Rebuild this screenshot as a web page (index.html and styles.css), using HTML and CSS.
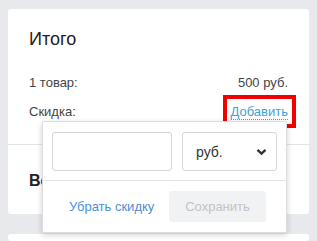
FILE: index.html
```html
<!DOCTYPE html>
<html lang="ru">
<head>
    <meta charset="UTF-8">
    <meta name="viewport" content="width=device-width, initial-scale=1.0">
    <title>Итого</title>
    <link rel="stylesheet" href="styles.css">
</head>
<body>

    <!-- Summary card -->
    <div class="card summary">
        <div class="summary-head">
            <h2 class="summary-title">Итого</h2>
            <div class="row">
                <span>1 товар:</span>
                <span>500 руб.</span>
            </div>
            <div class="row">
                <span>Скидка:</span>
                <span class="highlight"><a class="dotted-link" href="#">Добавить</a></span>
            </div>
        </div>
        <div class="summary-total">Всего</div>

        <!-- Discount popover -->
        <div class="popover">
            <div class="popover-body">
                <input class="field" type="text">
                <div class="select">
                    <span>руб.</span>
                    <svg width="11" height="8" viewBox="0 0 11 8"><path d="M1.5 1.8 L5.5 5.6 L9.5 1.8" fill="none" stroke="#333" stroke-width="2.4"/></svg>
                </div>
            </div>
            <div class="popover-foot">
                <a class="link" href="#">Убрать скидку</a>
                <button class="btn" disabled>Сохранить</button>
            </div>
        </div>
    </div>

    <div class="card next"></div>

</body>
</html>
```

FILE: styles.css
```css
body {
    margin: 0;
    padding: 9px 8px 0;
    background-color: #e8e9ec;
    font-family: "Liberation Sans", Arial, sans-serif;
    font-size: 13px;
    color: #333;
    height: 241px;
    box-sizing: border-box;
    overflow: hidden;
}
.card {
    background-color: #fff;
    border-radius: 3px;
}
.summary {
    position: relative;
    height: 205px;
}
.summary-head {
    padding: 18px 21px 18px;
    border-bottom: 1px solid #e3e4e7;
}
.summary-title {
    margin: 0 0 17px;
    font-size: 18px;
    font-weight: normal;
    line-height: 24px;
    color: #222;
}
.row {
    display: flex;
    justify-content: space-between;
    line-height: 29px;
    color: #444;
}
.highlight {
    outline: 4px solid #f20000;
    outline-offset: 4px;
    line-height: 17px;
    margin: 6px 0;
}
.dotted-link {
    color: #3aa3de;
    text-decoration: none;
    border-bottom: 1px dotted #3aa3de;
}
.summary-total {
    padding: 27px 21px 0;
    font-size: 16px;
    font-weight: bold;
    color: #222;
}
.popover {
    position: absolute;
    left: 34px;
    top: 112px;
    width: 245px;
    background-color: #fff;
    border: 1px solid #dcdde0;
    border-radius: 2px;
    box-shadow: 0 2px 6px rgba(0, 0, 0, 0.18);
    box-sizing: border-box;
}
.popover-body {
    display: flex;
    gap: 10px;
    padding: 10px 9px 9px;
    border-bottom: 1px solid #e3e4e7;
}
.field, .select {
    height: 39px;
    border: 1px solid #d5d6d9;
    border-radius: 3px;
    box-sizing: border-box;
}
.field {
    width: 120px;
    margin: 0;
}
.select {
    width: 95px;
    display: flex;
    align-items: center;
    justify-content: space-between;
    padding: 0 9px 0 13px;
    font-size: 14px;
    color: #333;
}
.popover-foot {
    display: flex;
    align-items: center;
    justify-content: space-between;
    padding: 10px 20px 10px 26px;
}
.link {
    color: #4d8fd9;
    text-decoration: none;
}
.btn {
    width: 97px;
    height: 31px;
    border: none;
    border-radius: 3px;
    background-color: #f1f2f4;
    color: #c2c3c5;
    font-family: inherit;
    font-size: 13px;
}
.next {
    margin-top: 20px;
    height: 7px;
}
```
